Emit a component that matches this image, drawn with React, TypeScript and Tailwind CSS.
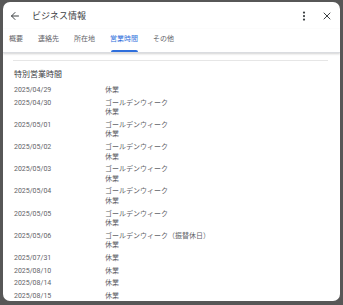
import { ArrowLeft, EllipsisVertical, X } from 'lucide-react';

type Row = { date: string; lines: string[] };

const rows: Row[] = [
  { date: '2025/04/29', lines: ['休業'] },
  { date: '2025/04/30', lines: ['ゴールデンウィーク', '休業'] },
  { date: '2025/05/01', lines: ['ゴールデンウィーク', '休業'] },
  { date: '2025/05/02', lines: ['ゴールデンウィーク', '休業'] },
  { date: '2025/05/03', lines: ['ゴールデンウィーク', '休業'] },
  { date: '2025/05/04', lines: ['ゴールデンウィーク', '休業'] },
  { date: '2025/05/05', lines: ['ゴールデンウィーク', '休業'] },
  { date: '2025/05/06', lines: ['ゴールデンウィーク（振替休日）', '休業'] },
  { date: '2025/07/31', lines: ['休業'] },
  { date: '2025/08/10', lines: ['休業'] },
  { date: '2025/08/14', lines: ['休業'] },
  { date: '2025/08/15', lines: ['休業'] },
];

const tabs = ['概要', '連絡先', '所在地', '営業時間', 'その他'];

export default function App() {
  return (
    <div
      className="w-[343px] h-[305px] bg-[#575757] pt-[2px] pl-[3px] overflow-hidden"
      style={{ fontFamily: 'Roboto, "Noto Sans CJK JP", sans-serif' }}
    >
      <div className="w-[337px] h-[299px] bg-white rounded-[7px] overflow-hidden flex flex-col">
        {/* Header */}
        <div className="h-[27px] shrink-0 flex items-center pl-[6px] pr-[7px] pt-[1px]">
          <ArrowLeft size={12} strokeWidth={2} className="text-[#3c4043]" />
          <span className="ml-[11px] text-[9px] leading-[12px] text-[#3c4043]">ビジネス情報</span>
          <div className="ml-auto flex items-center gap-[11px]">
            <EllipsisVertical size={12} strokeWidth={2.5} className="text-[#3c4043]" />
            <X size={12} strokeWidth={2} className="text-[#3c4043]" />
          </div>
        </div>

        {/* Tabs */}
        <div className="h-[24px] shrink-0 flex items-stretch gap-[15px] pl-[6px] border-b border-[#dadce0] shadow-[0_1px_2px_rgba(0,0,0,0.18)]">
          {tabs.map((t) => (
            <div key={t} className="relative flex items-center pb-[3px]">
              <span
                className={`text-[7px] leading-[10px] ${
                  t === '営業時間' ? 'text-[#2f6fdc]' : 'text-[#5f6368]'
                }`}
              >
                {t}
              </span>
              {t === '営業時間' && (
                <div className="absolute left-[1px] right-0 bottom-0 h-[2px] rounded-t-[2px] bg-[#2f6fdc]" />
              )}
            </div>
          ))}
        </div>

        {/* Content */}
        <div className="flex-1 overflow-hidden pl-[10px] pr-[12px]">
          <div className="mt-[7px] h-px bg-[#e6e6e6]" />
          <div className="mt-[7.5px] pl-px text-[8px] leading-[11px] text-[#3c4043]">特別営業時間</div>
          <div className="mt-[6.5px] flex flex-col gap-[3.2px] pl-px">
            {rows.map((r) => (
              <div key={r.date} className="flex text-[7px] leading-[9.5px] text-[#5f6368]">
                <div className="w-[91px] shrink-0">{r.date}</div>
                <div className="flex flex-col">
                  {r.lines.map((l, i) => (
                    <span key={i}>{l}</span>
                  ))}
                </div>
              </div>
            ))}
          </div>
        </div>
      </div>
    </div>
  );
}
